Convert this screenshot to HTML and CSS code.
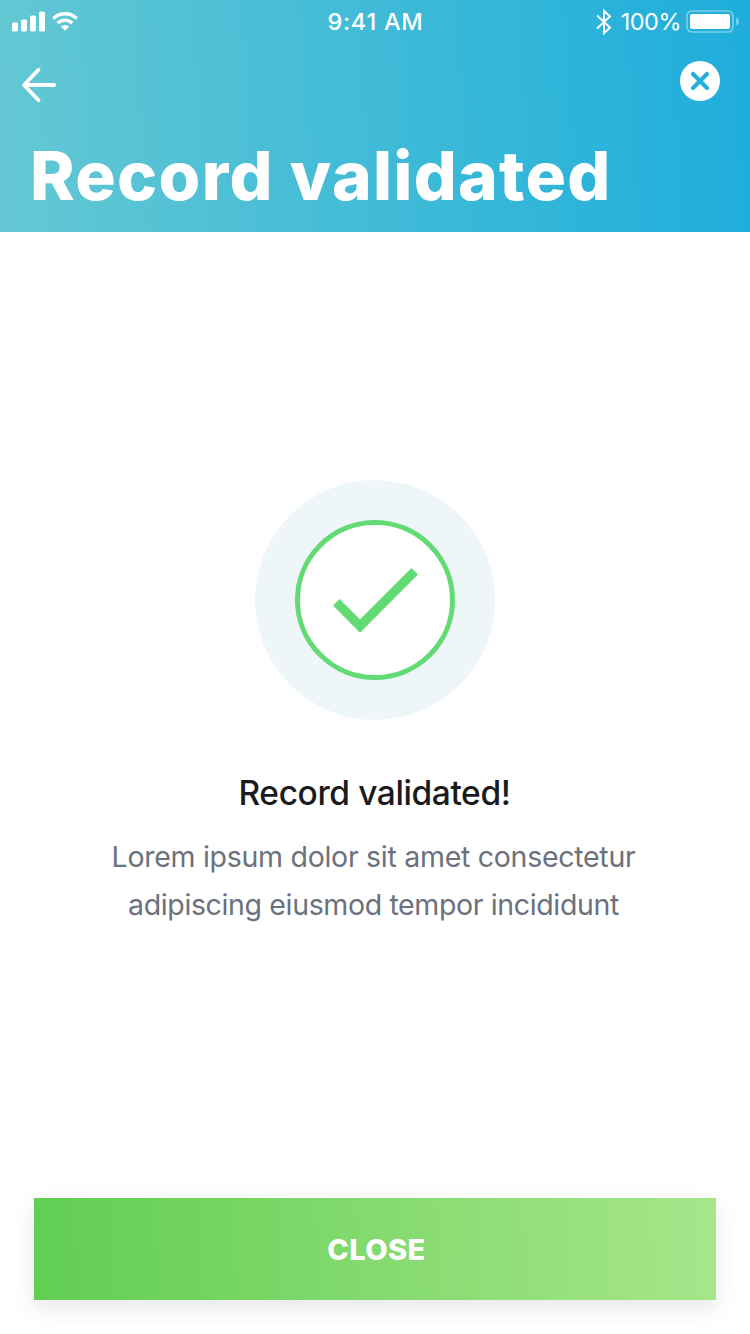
FILE: index.html
```html
<!DOCTYPE html>
<html lang="en">
<head>
<meta charset="utf-8">
<title>Record validated</title>
<link rel="stylesheet" href="styles.css">
</head>
<body>
<div class="screen">
  <header class="header">
    <div class="status">
      <div class="status-left">
        <svg width="34" height="20" viewBox="0 0 34 20" fill="#fff"><rect x="0" y="10.5" width="6" height="9" rx="1.6"/><rect x="9" y="7.500" width="6" height="12" rx="1.6"/><rect x="18" y="3.500" width="6" height="16" rx="1.6"/><rect x="27" y="-.5" width="6" height="20" rx="1.6"/></svg>
        <svg class="wifi" width="26" height="20" viewBox="0 0 26 20" fill="none" stroke="#fff" stroke-width="3.300"><path d="M1.300 6.600a16.500 16.500 0 0 1 23.400 0"/><path d="M5.700 11.200a10.300 10.300 0 0 1 14.600 0"/><path d="M8.800 14.600a6 6 0 0 1 8.400 0L13 18.800z" fill="#fff" stroke="none"/></svg>
      </div>
      <div class="time">9:41 AM</div>
      <div class="status-right">
        <svg width="16" height="28" viewBox="0 0 16 28" fill="none" stroke="#fff" stroke-width="1.900"><path d="M0 7.500 13 19.500 7 25.200V2.800L13 8.500 0 20.500"/></svg>
        <span class="percent">100%</span>
        <svg class="battery" width="53" height="24" viewBox="0 0 53 24"><rect x="1" y="1" width="46" height="21" rx="5" fill="none" stroke="#fff" stroke-opacity=".4" stroke-width="1.700"/><rect x="4" y="4" width="40" height="15" rx="2" fill="#fff"/><path d="M50 7.500a4.200 4.200 0 0 1 0 8z" fill="#fff" fill-opacity=".4"/></svg>
      </div>
    </div>
    <nav class="nav">
      <svg class="back" width="36" height="36" viewBox="0 0 36 36" fill="none" stroke="#fff" stroke-width="3.800" stroke-linecap="round" stroke-linejoin="round"><path d="M17.500 2.800 3 18l14.500 15.200M3 18h30.200"/></svg>
      <svg width="40" height="40" viewBox="0 0 40 40"><circle cx="20" cy="20" r="20" fill="#fff"/><path d="M13 13 27 27M27 13 13 27" stroke="#25b0da" stroke-width="4.200" stroke-linecap="round"/></svg>
    </nav>
    <h1 class="title">Record validated</h1>
  </header>
  <main class="content">
    <div class="badge">
      <div class="ring">
        <svg width="86" height="66" viewBox="0 0 86 66" fill="none" stroke="#62db74" stroke-width="9.400"><path d="M4.300 35.300 28 59 82.700 4.300"/></svg>
      </div>
    </div>
    <h2 class="subtitle">Record validated!</h2>
    <p class="text"><span class="line-one">Lorem ipsum dolor sit amet consectetur</span><br><span class="line-two">adipiscing eiusmod tempor incididunt</span></p>
  </main>
  <footer class="footer"><button class="close">CLOSE</button></footer>
</div>
</body>
</html>
```
FILE: styles.css
```css
* { box-sizing: border-box; }
body { margin: 0; background: #fff; font-family: Inter, sans-serif; }
svg { display: block; overflow: visible; flex: none; }
.screen { width: 750px; height: 1334px; display: flex; flex-direction: column; overflow: hidden; }
.header { height: 232px; flex: none; color: #fff; background: linear-gradient(86deg, #64c8d3 0%, #2bb3da 80%, #1eaddb 100%); }
.status { height: 44px; display: grid; grid-template-columns: 1fr auto 1fr; align-items: center; padding: 0 11px 0 12px; }
.status-left { display: flex; align-items: center; gap: 6px; padding-bottom: 1px; }
.time { font-size: 23.5px; font-weight: 500; line-height: 44px; letter-spacing: .75px; }
.status-right { display: flex; justify-content: flex-end; align-items: center; }
.percent { font-size: 23.5px; line-height: 44px; font-weight: 400; letter-spacing: -.5px; margin: 0 5px 0 8px; }
.nav { display: flex; justify-content: space-between; align-items: flex-start; padding: 17px 30px 0 21px; height: 92px; }
.back { margin-top: 6px; }
.title { margin: 0; padding-left: 30px; font-size: 67.5px; line-height: 79px; font-weight: 800; letter-spacing: 1.3px; white-space: nowrap; }
.content { flex: 1; display: flex; flex-direction: column; align-items: center; padding-top: 248px; }
.badge { width: 240px; height: 240px; border-radius: 50%; background: #eff6fa; display: grid; place-items: center; flex: none; }
.ring { width: 160px; height: 160px; border-radius: 50%; border: 5px solid #62db74; background: #fff; display: grid; place-items: center; }
.subtitle { margin: 49px 0 0; padding-right: 1px; font-size: 33.5px; line-height: 48px; font-weight: 500; letter-spacing: -.4px; color: #1b1b1d; }
.text { margin: 16px 0 0; padding-right: 3px; font-size: 28.5px; line-height: 48px; color: #6b717d; text-align: center; white-space: nowrap; }
.line-one { letter-spacing: -.28px; }
.line-two { letter-spacing: -.36px; }
.footer { padding: 0 34px 34px; }
.close { display: block; width: 100%; height: 102px; border: 0; padding: 2px 0 0 3px; color: #fff; background: linear-gradient(87deg, #61ce52, #a7e68b); box-shadow: 0 8px 20px rgba(50, 60, 85, .12); font: 800 29px/100px Inter, sans-serif; letter-spacing: .4px; }
```
